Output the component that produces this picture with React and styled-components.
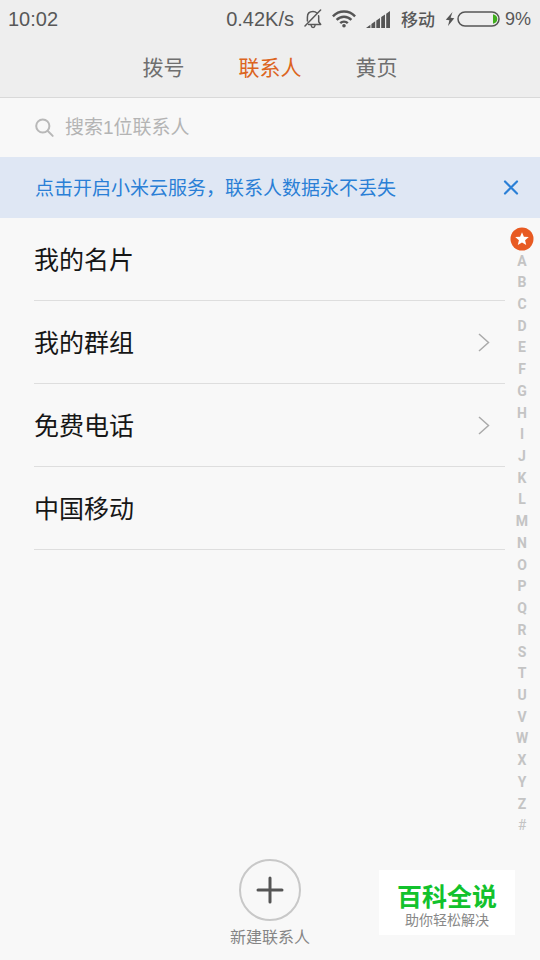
import { useState } from 'react';
import styled, { createGlobalStyle } from 'styled-components';

const TABS = ['拨号', '联系人', '黄页'];
const LETTERS = [...'ABCDEFGHIJKLMNOPQRSTUVWXYZ', '#'];
const ROWS = [
  { label: '我的名片' },
  { label: '我的群组', arrow: true },
  { label: '免费电话', arrow: true },
  { label: '中国移动' },
];

export default function App() {
  const [tab, setTab] = useState('联系人');
  const [query, setQuery] = useState('');
  const [showBanner, setShowBanner] = useState(true);

  return (
    <>
      <GlobalStyle />
      <Page>
        <Header>
          <StatusBar />
          <Tabs>
            {TABS.map((name) => (
              <Tab key={name} type="button" $active={tab === name} onClick={() => setTab(name)}>
                {name}
              </Tab>
            ))}
          </Tabs>
        </Header>

        <SearchBar>
          <SearchIcon />
          <SearchInput
            aria-label="搜索联系人"
            placeholder="搜索1位联系人"
            value={query}
            onChange={(e) => setQuery(e.target.value)}
          />
        </SearchBar>

        {showBanner && (
          <Banner>
            <BannerLink href="#cloud">点击开启小米云服务，联系人数据永不丢失</BannerLink>
            <CloseButton type="button" aria-label="关闭" onClick={() => setShowBanner(false)}>
              <svg width="16" height="16" viewBox="0 0 16 16" fill="none" stroke="currentColor" strokeWidth="2.2" strokeLinecap="round">
                <path d="M2 1.500l12 12M14 1.500L2 13.500" />
              </svg>
            </CloseButton>
          </Banner>
        )}

        <Body>
          <List>
            {ROWS.map((row) => (
              <Row key={row.label}>
                <RowButton type="button">
                  <RowLabel>{row.label}</RowLabel>
                  {row.arrow && <Chevron />}
                </RowButton>
              </Row>
            ))}
          </List>
          <Index aria-label="字母索引">
            <IndexLink href="#starred" aria-label="收藏">
              <Star />
            </IndexLink>
            {LETTERS.map((l) => (
              <IndexLink key={l} href={`#${l}`} $light={l === '#'}>
                {l}
              </IndexLink>
            ))}
          </Index>
        </Body>

        <Footer>
          <AddButton type="button">
            <AddCircle>
              <svg width="28" height="28" viewBox="0 0 28 28" fill="none" stroke="#555" strokeWidth="3" strokeLinecap="round">
                <path d="M14 2v24M2 14h24" />
              </svg>
            </AddCircle>
            新建联系人
          </AddButton>
        </Footer>

        <Watermark>
          <WatermarkTitle>百科全说</WatermarkTitle>
          <WatermarkText>助你轻松解决</WatermarkText>
        </Watermark>
      </Page>
    </>
  );
}

function StatusBar() {
  return (
    <Status>
      <span>10:02</span>
      <StatusGroup>
        <span>0.42K/s</span>
        <MutedBell />
        <Wifi />
        <Signal />
        <Carrier>移动</Carrier>
        <Battery />
        <Percent>9%</Percent>
      </StatusGroup>
    </Status>
  );
}

const MutedBell = () => (
  <svg width="18" height="20" viewBox="0 0 18 20" fill="none" stroke="#585858" strokeWidth="1.5" strokeLinecap="round" strokeLinejoin="round">
    <path d="M3.400 12V8.200C3.400 4.800 5.600 2.600 9 2.600c1.600 0 2.900.5 3.900 1.400M14.600 6.800c.1.500.1.900.1 1.400v4.600l2 2.700H4.600" />
    <path d="M7.200 16.500c.2 1.300 1 1.900 1.900 1.900s1.700-.6 1.900-1.900" />
    <path d="M16.600 1L1 17" />
  </svg>
);

const Wifi = () => (
  <svg width="24" height="18" viewBox="0 0 24 18" fill="none" stroke="#555" strokeWidth="2.4">
    <path d="M.9 6.300C7-.1 17-.1 23.100 6.300M4.600 9.900c4.200-4.300 10.600-4.300 14.800 0M8.200 13.200c2.200-2.100 5.400-2.100 7.600 0" />
    <circle cx="12" cy="15.800" r="1.800" fill="#555" stroke="none" />
  </svg>
);

const Signal = () => (
  <svg width="25" height="17" viewBox="0 0 25 17" fill="#555">
    <path d="M0 17l4.400-3.200V17zM5.400 13l3.800-2.700V17H5.400zM10.300 9.600L14 7v10h-3.700zM15.200 6.100l3.800-2.600V17h-3.800zM20.200 2.700L24 0v17h-3.800z" />
  </svg>
);

const Battery = () => (
  <svg width="55" height="18" viewBox="0 0 55 18" fill="none">
    <path d="M7.500 2L.8 9.800l3.600.5L3 16l6.300-7.700-3.700-.6z" fill="#555" />
    <rect x="13" y="2" width="41" height="14" rx="7" stroke="#555" strokeWidth="1.500" />
    <path d="M48 4.300c3 .6 4.300 2.600 4.300 4.700s-1.300 4.100-4.300 4.700z" fill="#3fae1d" />
  </svg>
);

const SearchIcon = () => (
  <svg width="20" height="20" viewBox="0 0 20 20" fill="none" stroke="#b8b8b8" strokeWidth="2" strokeLinecap="round">
    <circle cx="7.800" cy="8" r="6.600" />
    <path d="M12.800 13l4.900 4.900" />
  </svg>
);

const Chevron = () => (
  <svg width="12" height="20" viewBox="0 0 12 20" fill="none" stroke="#aaa" strokeWidth="1.500">
    <path d="M1 2l9.500 8.500L1 19" />
  </svg>
);

const Star = () => (
  <svg width="24" height="24" viewBox="0 0 24 24">
    <circle cx="12" cy="12" r="11.500" fill="#e85a22" />
    <path d="M12 5.200l1.900 4.500 4.900.4-3.700 3.200 1.100 4.800-4.200-2.600-4.200 2.600 1.100-4.800-3.700-3.200 4.900-.4z" fill="#fff" />
  </svg>
);

const GlobalStyle = createGlobalStyle`
  * {
    box-sizing: border-box;
  }

  body {
    margin: 0;
    background: #f8f8f8;
    font-family: 'Liberation Sans', 'Noto Sans CJK SC', sans-serif;
  }

  button, input {
    font: inherit;
    color: inherit;
    border: 0;
    padding: 0;
    background: none;
  }

  button {
    cursor: pointer;
  }

  a {
    color: inherit;
    text-decoration: none;
  }

  svg {
    display: block;
    flex-shrink: 0;
  }
`;

const Page = styled.div`
  position: relative;
  display: flex;
  flex-direction: column;
  min-height: 100vh;
`;

const Header = styled.header`
  background: #eeeeee;
  border-bottom: 1px solid #d9d9d9;
`;

const Status = styled.div`
  display: flex;
  justify-content: space-between;
  align-items: center;
  height: 38px;
  padding: 0 9px 0 8px;
  font-size: 20px;
  color: #585858;
`;

const StatusGroup = styled.div`
  display: flex;
  align-items: center;
  gap: 10px;
`;

const Carrier = styled.span`
  padding-bottom: 2px;
  font-size: 17px;
  font-weight: 500;
`;

const Percent = styled.span`
  font-size: 18px;
  margin-left: -5px;
`;

const Tabs = styled.nav`
  display: flex;
  justify-content: center;
  gap: 54px;
  height: 59px;
  padding-bottom: 3px;
`;

const Tab = styled.button`
  font-size: 21px;
  color: ${({ $active }) => ($active ? '#dc6420' : '#6f6f6f')};
`;

const SearchBar = styled.label`
  display: flex;
  align-items: center;
  gap: 10px;
  height: 59px;
  padding: 0 35px;
  font-size: 19px;
`;

const SearchInput = styled.input`
  flex: 1;
  min-width: 0;
  color: #333;
  outline: none;

  &::placeholder {
    color: #b4b4b4;
    opacity: 1;
  }
`;

const Banner = styled.div`
  display: flex;
  align-items: center;
  justify-content: space-between;
  height: 61px;
  padding: 0 21px 0 35px;
  background: #dfe7f4;
  color: #2a7fd6;
`;

const BannerLink = styled.a`
  padding-bottom: 2px;
  font-size: 19px;
`;

const CloseButton = styled.button`
  flex-shrink: 0;
`;

const Body = styled.main`
  flex: 1;
  display: flex;
`;

const List = styled.ul`
  flex: 1;
  margin: 0;
  padding: 0 0 0 34px;
  list-style: none;
`;

const Row = styled.li`
  border-bottom: 1px solid #dedede;
`;

const RowButton = styled.button`
  display: flex;
  align-items: center;
  justify-content: space-between;
  width: 100%;
  height: 82px;
  padding-right: 15px;
  font-size: 25px;
  color: #161616;
`;

const RowLabel = styled.span`
  padding-bottom: 3px;
`;

const Index = styled.nav`
  display: flex;
  flex-direction: column;
  width: 35px;
  padding: 10px 1px 0 0;
`;

const IndexLink = styled.a`
  flex: 1;
  display: flex;
  align-items: center;
  justify-content: center;
  min-height: 0;
  font-family: Roboto, sans-serif;
  font-size: 14px;
  line-height: 16px;
  font-weight: ${({ $light }) => ($light ? 400 : 700)};
  color: #c4c4c4;

  svg {
    margin: -2px 0;
  }
`;

const Footer = styled.footer`
  display: flex;
  justify-content: center;
  padding: 23px 0 10px;
`;

const AddButton = styled.button`
  display: flex;
  flex-direction: column;
  align-items: center;
  gap: 5px;
  font-size: 16px;
  line-height: 24px;
  color: #858585;
`;

const AddCircle = styled.span`
  display: flex;
  align-items: center;
  justify-content: center;
  width: 62px;
  height: 62px;
  border: 2px solid #c8c8c8;
  border-radius: 50%;
`;

const Watermark = styled.aside`
  position: absolute;
  right: 25px;
  bottom: 25px;
  padding: 12px 18px 7px;
  background: #fff;
  text-align: center;
`;

const WatermarkTitle = styled.div`
  font-size: 25px;
  line-height: 30px;
  font-weight: 700;
  color: #12c22c;
`;

const WatermarkText = styled.div`
  font-size: 14px;
  line-height: 16px;
  color: #888;
`;
